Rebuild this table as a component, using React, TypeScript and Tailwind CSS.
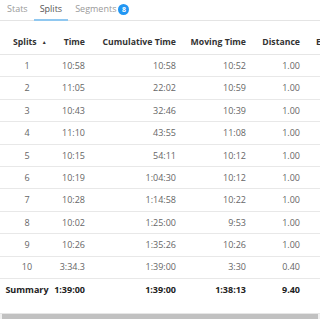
const rows = [
  { split: "1", time: "10:58", cumulative: "10:58", moving: "10:52", distance: "1.00" },
  { split: "2", time: "11:05", cumulative: "22:02", moving: "10:59", distance: "1.00" },
  { split: "3", time: "10:43", cumulative: "32:46", moving: "10:39", distance: "1.00" },
  { split: "4", time: "11:10", cumulative: "43:55", moving: "11:08", distance: "1.00" },
  { split: "5", time: "10:15", cumulative: "54:11", moving: "10:12", distance: "1.00" },
  { split: "6", time: "10:19", cumulative: "1:04:30", moving: "10:12", distance: "1.00" },
  { split: "7", time: "10:28", cumulative: "1:14:58", moving: "10:22", distance: "1.00" },
  { split: "8", time: "10:02", cumulative: "1:25:00", moving: "9:53", distance: "1.00" },
  { split: "9", time: "10:26", cumulative: "1:35:26", moving: "10:26", distance: "1.00" },
  { split: "10", time: "3:34.3", cumulative: "1:39:00", moving: "3:30", distance: "0.40" },
];

const App = () => {
  return (
    <div
      className="w-[320px] h-[319px] overflow-hidden bg-white text-[9px]"
      style={{ fontFamily: '"Open Sans", "Liberation Sans", sans-serif' }}
    >
      {/* Tabs */}
      <div className="flex h-[21px] border-b border-[#e4e4e4] pl-[1px]">
        <div className="px-[6px] pt-[2px] text-[#9a9a9a]">Stats</div>
        <div className="px-[6px] pt-[2px] text-[#555] border-b-2 border-[#90c8f0] mb-[-1px]">Splits</div>
        <div className="flex items-start px-[7px] pt-[2px] text-[#9a9a9a]">
          Segments
          <span className="ml-[2px] mt-[2px] flex h-[11px] w-[11px] items-center justify-center rounded-full bg-[#2196f3] text-[7px] font-bold leading-none text-white">
            8
          </span>
        </div>
      </div>

      {/* Table */}
      <div className="mt-[11px] w-[430px]">
        <div className="flex h-[23px] items-center border-b border-[#e6e6e6] font-bold text-[8.7px] text-[#333] whitespace-nowrap">
          <div className="w-[54px] pl-[13px] flex items-center">
            Splits
            <span className="ml-[5px] text-[5px] text-[#333]">▲</span>
          </div>
          <div className="w-[41px] pr-[10px] text-right">Time</div>
          <div className="w-[91px] pr-[10px] text-right">Cumulative Time</div>
          <div className="w-[70px] pr-[10px] text-right">Moving Time</div>
          <div className="w-[54px] pr-[10px] text-right">Distance</div>
          <div className="pl-[6px]">Elevation Gain</div>
        </div>

        {rows.map((row) => (
          <div
            key={row.split}
            className="flex h-[22.4px] items-center border-b border-[#e8e8e8] text-[#666] whitespace-nowrap"
          >
            <div className="w-[54px] text-center">{row.split}</div>
            <div className="w-[41px] pr-[10px] text-right">{row.time}</div>
            <div className="w-[91px] pr-[10px] text-right">{row.cumulative}</div>
            <div className="w-[70px] pr-[10px] text-right">{row.moving}</div>
            <div className="w-[54px] pr-[10px] text-right">{row.distance}</div>
          </div>
        ))}

        <div className="flex h-[22.4px] items-center font-bold text-[#222] whitespace-nowrap">
          <div className="w-[54px] text-center">Summary</div>
          <div className="w-[41px] pr-[10px] text-right">1:39:00</div>
          <div className="w-[91px] pr-[10px] text-right">1:39:00</div>
          <div className="w-[70px] pr-[10px] text-right">1:38:13</div>
          <div className="w-[54px] pr-[10px] text-right">9.40</div>
        </div>
      </div>

      {/* horizontal scrollbar */}
      <div className="mt-[12px] h-[8px] border-t border-[#e6e6e6] bg-[#f1f1f1] px-[2px]">
        <div className="h-full bg-[#c1c1c1]" />
      </div>
    </div>
  );
};

export default App;
